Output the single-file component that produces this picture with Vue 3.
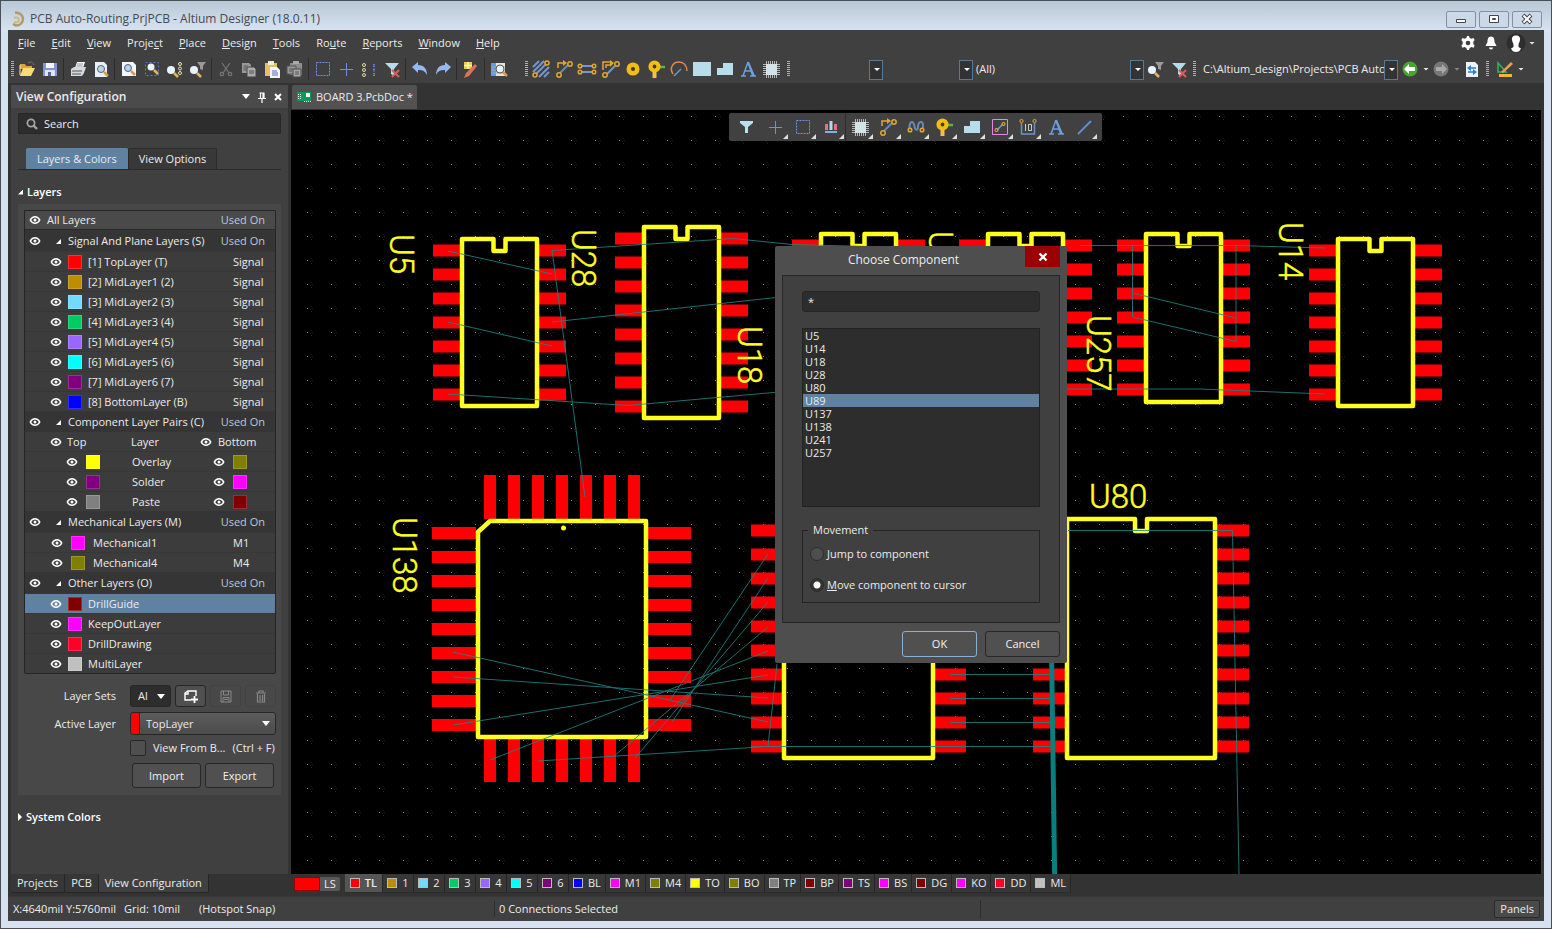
<script setup>
import { ref } from 'vue'

const menus = [
  ['', 'F', 'ile'], ['', 'E', 'dit'], ['', 'V', 'iew'], ['Proje', 'c', 't'], ['', 'P', 'lace'], ['', 'D', 'esign'],
  ['', 'T', 'ools'], ['Ro', 'u', 'te'], ['', 'R', 'eports'], ['', 'W', 'indow'], ['', 'H', 'elp']
]

const fileTools = [
  ['open', 'save'], ['print', 'preview'], ['zoom-page', 'zoom-area', 'zoom-objects', 'zoom-filter'],
  ['cut', 'copy', 'paste', 'paste-special'], ['select-area', 'move', 'deselect', 'clear-filter'],
  ['undo', 'redo'], ['wizard'], ['inspect']
]
const placeTools = ['multi-route', 'route', 'diff-pair', 'route-diff', 'pad', 'via', 'arc', 'fill', 'polygon', 'string', 'component']
const floatTools = [
  ['funnel', false], ['move', true], ['select-area', true], ['align', true], ['component', true], ['route', true],
  ['tune', true], ['via', true], ['polygon', true], ['room', true], ['dimension', true], ['string', false], ['line', true]
]

const signalLayers = [
  ['[1] TopLayer (T)', '#ff0000'], ['[2] MidLayer1 (2)', '#bc8e00'], ['[3] MidLayer2 (3)', '#70dbfa'],
  ['[4] MidLayer3 (4)', '#00cc66'], ['[5] MidLayer4 (5)', '#9966ff'], ['[6] MidLayer5 (6)', '#00ffff'],
  ['[7] MidLayer6 (7)', '#800080'], ['[8] BottomLayer (B)', '#0000ff']
]
const pairLayers = [
  ['Overlay', '#ffff00', '#808000'], ['Solder', '#800080', '#ff00ff'], ['Paste', '#808080', '#800000']
]
const mechLayers = [['Mechanical1', '#ff00ff', 'M1'], ['Mechanical4', '#808000', 'M4']]
const otherLayers = [
  ['DrillGuide', '#800000'], ['KeepOutLayer', '#ff00ff'], ['DrillDrawing', '#ff002a'], ['MultiLayer', '#c0c0c0']
]
const activeRow = ref('DrillGuide')

const layerTabs = [
  ['TL', '#ff0000'], ['1', '#bc8e00'], ['2', '#70dbfa'], ['3', '#00cc66'], ['4', '#9966ff'], ['5', '#00ffff'],
  ['6', '#800080'], ['BL', '#0000ff'], ['M1', '#ff00ff'], ['M4', '#808000'], ['TO', '#ffff00'], ['BO', '#808000'],
  ['TP', '#808080'], ['BP', '#800000'], ['TS', '#800080'], ['BS', '#ff00ff'], ['DG', '#800000'], ['KO', '#ff00ff'],
  ['DD', '#ff002a'], ['ML', '#c0c0c0']
]

const mask = ref('*')
const components = ['U5', 'U14', 'U18', 'U28', 'U80', 'U89', 'U137', 'U138', 'U241', 'U257']
const chosen = ref('U89')
const movement = ref('cursor')

// Board drawing: every dual-row package is an outline with a notch and two columns of pads.
const dip = (x, y, w, h, pads, padTop, padLen) => {
  const mid = x + w / 2
  const rects = []
  for (let i = 0; i < pads; i++) {
    const py = padTop + 24 * i
    rects.push({ x: x - padLen - 1, y: py, w: padLen, h: 12 }, { x: x + w + 1, y: py, w: padLen, h: 12 })
  }
  return {
    rects,
    outline: `M${x} ${y}H${mid - 6}V${y + 12}H${mid + 6}V${y}H${x + w}V${y + h}H${x}Z`
  }
}
const dips = [
  dip(462, 239, 75, 167, 7, 244.5, 28),
  dip(644, 227, 75, 191, 8, 232.5, 28),
  dip(821, 234, 75, 168, 7, 239.5, 28),
  dip(988, 234, 75, 168, 7, 239.5, 28),
  dip(1146, 234, 75, 168, 7, 239.5, 28),
  dip(1338, 239, 75, 167, 7, 244.5, 28),
  dip(784, 519, 149, 239, 10, 524.5, 32),
  dip(1067, 519, 148, 239, 10, 524.5, 33)
]
const quadPads = []
for (let i = 0; i < 9; i++) {
  quadPads.push({ x: 432, y: 527 + 24 * i, w: 44, h: 12 }, { x: 647, y: 527 + 24 * i, w: 44, h: 12 })
}
for (let i = 0; i < 7; i++) {
  quadPads.push({ x: 484 + 24 * i, y: 475, w: 12, h: 44 }, { x: 484 + 24 * i, y: 738, w: 12, h: 44 })
}
const nets = [
  'M448 251L552 274', 'M448 322L552 346', 'M448 394L628 405.5L790 391', 'M552 250.5L733 238.5L792 244.5L1000 250',
  'M552 322L790 296', 'M552 250L585 497', 'M1080 245.5H1236L1325 248', 'M1066 389H1200L1325 394',
  'M1132.5 245V317L1236 341.5V245', 'M1132.5 293L1236 318',
  'M453 652L768 722', 'M453 677L768 698', 'M453 725L768 675', 'M490 760L768 651', 'M538 761L768 746.5',
  'M635 758L768 602', 'M613 757L768 627', 'M670 700L768 554', 'M672 722L768 578', 'M777 664L768 746',
  'M751 746.5H1052', 'M950 674.5H1052', 'M950 698.5H1052', 'M950 722.5H1052', 'M1068 530.5H1232.5L1239.5 900'
]
const labels = [
  ['U5', 390, 234], ['U28', 572, 229], ['U18', 738, 326], ['U14', 1279, 222], ['U257', 1087, 315], ['U138', 393, 517], ['U89', 929, 231]
]
</script>

<template>
  <div class="window">
    <svg class="defs" aria-hidden="true">
      <symbol id="i-open" viewBox="0 0 20 20"><path d="M3 5h5l1 2h6v3H3z" fill="#d9a441"/><path d="M3 17L6 9h12l-4 8z" fill="#ffd978"/><path d="M3 16V6" stroke="#ffe9a8"/><path d="M11 4c3-2 5-1 6 2" fill="none" stroke="#777"/></symbol>
      <symbol id="i-save" viewBox="0 0 20 20"><path d="M3 4h14v13H3z" fill="#8295d2"/><path d="M6 4h8v5H6z" fill="#f4f6fd"/><path d="M5 11h10v6H5z" fill="#dfe5f5"/><path d="M8 13h3v4H8z" fill="#55649a"/></symbol>
      <symbol id="i-print" viewBox="0 0 20 20"><path d="M7 9l2-6h8l-2 6z" fill="#fff"/><path d="M9 5h6M8.500 7h6" stroke="#888"/><path d="M3 10l3-2h12l-2 6-2 3H3z" fill="#d5d8dc"/><path d="M4 12h10M4 15h9" stroke="#555"/></symbol>
      <symbol id="i-preview" viewBox="0 0 20 20"><path d="M4 3h9l3 3v12H4z" fill="#e6f0fb"/><circle cx="10" cy="10" r="3.500" fill="#b9d4ee" stroke="#566"/><path d="M13 13l4 4" stroke="#d89a52" stroke-width="2.500"/></symbol>
      <symbol id="i-zoom-page" viewBox="0 0 20 20"><path d="M3 3h11l3 3v11H3z" fill="#f2f8ff"/><circle cx="9" cy="9" r="3.500" fill="#b5d2f0" stroke="#4d5f7c"/><path d="M12 12l4 4" stroke="#d89a52" stroke-width="2.500"/></symbol>
      <symbol id="i-zoom-area" viewBox="0 0 20 20"><path d="M3.500 3.500h13v13h-13z" fill="none" stroke="#5f76d0" stroke-dasharray="2 2"/><circle cx="9" cy="8" r="3.500" fill="#e6f4ff"/><path d="M12 11l4 4" stroke="#e7b35d" stroke-width="2.500"/></symbol>
      <symbol id="i-zoom-objects" viewBox="0 0 20 20"><circle cx="6" cy="11" r="4" fill="#e6f4ff"/><path d="M9 14l4 4" stroke="#e7b35d" stroke-width="2.500"/><g fill="none" stroke="#eee6a0"><circle cx="15" cy="5" r="1.500"/><circle cx="15" cy="9.500" r="1.500"/><circle cx="15" cy="14" r="1.500"/></g></symbol>
      <symbol id="i-zoom-filter" viewBox="0 0 20 20"><circle cx="6" cy="11" r="4" fill="#e6f4ff"/><path d="M9 14l4 4" stroke="#e7b35d" stroke-width="2.500"/><path d="M9 3h9l-3 4v4l-3-1V7z" fill="#999"/></symbol>
      <symbol id="i-cut" viewBox="0 0 20 20"><g fill="none" stroke="#757575" stroke-width="1.300"><path d="M6 4l7 10M14 4L7 14"/><circle cx="6" cy="15" r="1.700"/><circle cx="14" cy="15" r="1.700"/></g></symbol>
      <symbol id="i-copy" viewBox="0 0 20 20"><path d="M3 4h7l2 2v8H3z" fill="#999"/><path d="M8 8h7l2 2v8H8z" fill="#aaa" stroke="#444"/><path d="M10 12h5M10 14h5M4.500 7h4M4.500 9h3M4.500 11h3" stroke="#555"/></symbol>
      <symbol id="i-paste" viewBox="0 0 20 20"><path d="M3 4h12v13H3z" fill="#e9bd67"/><path d="M6 2h6v4H6z" fill="#f5edcf"/><path d="M8 8h7l3 3v8H8z" fill="#f2f6ff"/><path d="M10 12h5M10 14h6M10 16h6" stroke="#5570a8"/></symbol>
      <symbol id="i-paste-special" viewBox="0 0 20 20"><path d="M5 4h12v12H5z" fill="#8d8d8d"/><path d="M8 2h6v3H8z" fill="#aaa"/><path d="M2 7h9v8H2z" fill="#999" stroke="#555"/><path d="M8 10h8v8H8z" fill="#a5a5a5" stroke="#4a4a4a"/><path d="M4 10h4M4 12h3M10 13h4M10 15h4" stroke="#555"/></symbol>
      <symbol id="i-select-area" viewBox="0 0 20 20"><path d="M3.500 3.500h13v13h-13z" fill="none" stroke="#7490e0" stroke-dasharray="2 1"/></symbol>
      <symbol id="i-move" viewBox="0 0 20 20"><path d="M10.500 4v13M4 10.500h13" stroke="#6c90dc"/></symbol>
      <symbol id="i-deselect" viewBox="0 0 20 20"><g fill="none" stroke="#e4dca0"><circle cx="5" cy="6" r="1.500"/><circle cx="5" cy="11" r="1.500"/><circle cx="5" cy="16" r="1.500"/></g><path d="M15 5v3M15 9.500v3M15 14v3" stroke="#6480cc" stroke-width="2" stroke-dasharray="1.500 .5"/></symbol>
      <symbol id="i-clear-filter" viewBox="0 0 20 20"><path d="M3 4h14l-5 6v7l-3-2v-5z" fill="#b4dce8"/><path d="M10 11l7 7M17 11l-7 7" stroke="#e05a5a" stroke-width="2"/></symbol>
      <symbol id="i-undo" viewBox="0 0 20 20"><path d="M2 8l6-5v3c6 0 9 4 9 10-2-4-4-5-9-5v3z" fill="#94b8f0"/></symbol>
      <symbol id="i-redo" viewBox="0 0 20 20"><path d="M18 8l-6-5v3C6 6 3 10 3 16c2-4 4-5 9-5v3z" fill="#94b8f0"/></symbol>
      <symbol id="i-wizard" viewBox="0 0 20 20"><path d="M3 3h8v7H3z" fill="#e8cd4c"/><path d="M7 3v7M3 6.500h8" stroke="#fff6b8" stroke-width="1.500"/><path d="M14 5l2 2-8 10-5 2 2-5z" fill="#dc7258"/></symbol>
      <symbol id="i-inspect" viewBox="0 0 20 20"><path d="M2 4h5v13H2z" fill="#5f9ede"/><path d="M7 4h9v13H7z" fill="#ece2d4"/><path d="M2 8h14M2 11h14M2 14h14" stroke="#9ab" /><circle cx="11" cy="10" r="4" fill="#e6f4ff" stroke="#555"/><path d="M14 13l4 4" stroke="#d89a52" stroke-width="2.500"/></symbol>
      <symbol id="i-multi-route" viewBox="0 0 20 20"><path d="M2 8l6-6M2 13L13 2M4 16L16 4M8 18L18 8M13 18l5-5" stroke="#7297d2" stroke-width="2"/><g fill="#404040" stroke="#e3a72f" stroke-width="1.500"><circle cx="4" cy="16" r="2"/><circle cx="16" cy="4" r="2"/></g></symbol>
      <symbol id="i-route" viewBox="0 0 20 20"><path d="M4 9V4h6" fill="none" stroke="#e3a72f" stroke-width="1.500"/><path d="M9 1l4 3-4 3z" fill="#e3a72f"/><path d="M6 14l8-8" stroke="#6589b8" stroke-width="2"/><g fill="none" stroke="#e3a72f" stroke-width="1.500"><circle cx="5" cy="16" r="2.200"/><circle cx="16" cy="5" r="2.200"/></g></symbol>
      <symbol id="i-diff-pair" viewBox="0 0 20 20"><path d="M5 7h10M5 13h10" stroke="#7297d2" stroke-width="2"/><g fill="none" stroke="#e3a72f" stroke-width="1.500"><circle cx="3" cy="7" r="1.800"/><circle cx="17" cy="7" r="1.800"/><circle cx="3" cy="13" r="1.800"/><circle cx="17" cy="13" r="1.800"/></g></symbol>
      <symbol id="i-route-diff" viewBox="0 0 20 20"><path d="M3 11V3h8M6 9V6h5" fill="none" stroke="#e3a72f" stroke-width="1.500"/><path d="M10 1l4 3-4 4z" fill="#e3a72f"/><path d="M7 15l8-8" stroke="#7297d2" stroke-width="2"/><g fill="none" stroke="#e3a72f" stroke-width="1.500"><circle cx="5" cy="16" r="2.200"/><circle cx="17" cy="5" r="2.200"/></g></symbol>
      <symbol id="i-pad" viewBox="0 0 20 20"><circle cx="10" cy="10" r="4.300" fill="#4a3a00" stroke="#f2bd17" stroke-width="4.500"/></symbol>
      <symbol id="i-via" viewBox="0 0 20 20"><path d="M10 8h9" stroke="#55b455" stroke-width="2.500"/><path d="M8.500 10v9" stroke="#f0c058" stroke-width="4"/><circle cx="8.500" cy="7.500" r="4" fill="#4a3a00" stroke="#f2bd17" stroke-width="4.200"/></symbol>
      <symbol id="i-arc" viewBox="0 0 20 20"><path d="M4 15C0 9 4 3 10 3c5 0 8 4 8 9" fill="none" stroke="#e08a4c" stroke-width="1.500"/><path d="M5 17l7-7" stroke="#7297d2" stroke-width="1.500"/></symbol>
      <symbol id="i-fill" viewBox="0 0 20 20"><path d="M1 3h18v14H1z" fill="#b7dcea"/></symbol>
      <symbol id="i-polygon" viewBox="0 0 20 20"><path d="M2 9h6V4h10v12H2z" fill="#b7dcea"/></symbol>
      <symbol id="i-string" viewBox="0 0 20 20"><path d="M10 3l6 14M10 3L5 17M7 12h6M3 17h5M12 17h6" stroke="#6c9fdc" stroke-width="1.500" fill="none"/><path d="M9 3h2l6 14h-3z" fill="#6c9fdc"/></symbol>
      <symbol id="i-component" viewBox="0 0 20 20"><path d="M5.500 2v17M7.500 2v17M9.500 2v17M11.500 2v17M13.500 2v17M15.500 2v17M2 5.500h17M2 7.500h17M2 9.500h17M2 11.500h17M2 13.500h17M2 15.500h17" stroke="#b5b5b5"/><path d="M5 5h11v11H5z" fill="#d2e4ea"/></symbol>
      <symbol id="i-funnel" viewBox="0 0 20 20"><path d="M3 4h13v2l-5 4v6H8v-6L3 6z" fill="#b9e0ee"/></symbol>
      <symbol id="i-align" viewBox="0 0 20 20"><path d="M4 7h3v6H4zM13 7h3v6h-3z" fill="#e07484"/><path d="M8.500 4h3v9h-3z" fill="#b9d4ee"/><path d="M4 15h12" stroke="#88aee6" stroke-width="2"/></symbol>
      <symbol id="i-tune" viewBox="0 0 20 20"><path d="M5 13C2 10 4 5 6 5s2 3 3 6 3 2 3-1 1-5 3-5 3 4 1 8" fill="none" stroke="#6589b8" stroke-width="2"/><g fill="#404040" stroke="#e3a72f" stroke-width="1.500"><circle cx="4" cy="13" r="1.800"/><circle cx="16" cy="13" r="1.800"/></g></symbol>
      <symbol id="i-room" viewBox="0 0 20 20"><path d="M2.500 2.500h15v15h-15z" fill="none" stroke="#e58ae0"/><path d="M7 13l6-6" stroke="#6c9fdc" stroke-width="1.500"/><g fill="none" stroke="#e3a72f" stroke-width="1.200"><circle cx="6.500" cy="13" r="1.500"/><circle cx="13.500" cy="7" r="1.500"/></g></symbol>
      <symbol id="i-dimension" viewBox="0 0 20 20"><path d="M3.500 6v11h13V6" fill="none" stroke="#6b93c8" stroke-width="1.500"/><path d="M7.500 7v7M10.500 7.500h3v6h-3z" fill="none" stroke="#ccc"/><circle cx="3.500" cy="4" r="1.600" fill="none" stroke="#e3a72f"/><circle cx="16.500" cy="4" r="1.600" fill="none" stroke="#e3a72f"/></symbol>
      <symbol id="i-line" viewBox="0 0 20 20"><path d="M4 17L17 4" stroke="#5c8fcd" stroke-width="2"/></symbol>
      <symbol id="i-back" viewBox="0 0 20 20"><circle cx="10" cy="10" r="7.500" fill="#44a62e"/><path d="M4 10l5-5v3h6v4H9v3z" fill="#fff"/></symbol>
      <symbol id="i-forward" viewBox="0 0 20 20"><circle cx="10" cy="10" r="7.500" fill="#777"/><path d="M16 10l-5-5v3H5v4h6v3z" fill="#aaa"/></symbol>
      <symbol id="i-refresh" viewBox="0 0 20 20"><path d="M4 3h9l3 3v12H4z" fill="#eaf3fd"/><path d="M8 9h6M6 13h6" stroke="#2d7fd2" stroke-width="1.500"/><path d="M9 6L5 9l4 3zM11 10l4 3-4 3z" fill="#2d7fd2"/></symbol>
      <symbol id="i-drafting" viewBox="0 0 20 20"><path d="M3 4v9h8z" fill="none" stroke="#35b26a" stroke-width="1.500"/><path d="M6 13L16 3l2 2L8 14z" fill="#ee9e52"/><path d="M4 15h13v3H4z" fill="#f0b442"/></symbol>
      <symbol id="i-eye" viewBox="0 0 12 12"><path d="M1.300 6c2.300-4.400 7.100-4.400 9.400 0-2.300 4.400-7.100 4.400-9.400 0z" fill="none" stroke="#fff" stroke-width="1.600"/><circle cx="6" cy="6" r="1.500" fill="#fff"/></symbol>
      <symbol id="i-gear" viewBox="0 0 16 16"><path d="M7 1h2l.6 2 1.800.8L13.500 3l1.200 2-1.400 1.700v2.200l1.400 1.800-1.200 2-2.100-.6-1.800.9L9 15H7l-.6-2-1.800-.9-2.100.6-1.200-2 1.400-1.800V6.700L1.300 5l1.200-2 2.100.8L6.400 3z" fill="#fff"/><circle cx="8" cy="8" r="2.300" fill="#404040"/></symbol>
      <symbol id="i-bell" viewBox="0 0 16 16"><path d="M8 1.500c3 0 3.500 3 3.500 5.500l2 4H2.500l2-4c0-2.500.5-5.500 3.500-5.500zM6 12.500h4c0 2.500-4 2.500-4 0z" fill="#fff"/></symbol>
      <symbol id="i-user" viewBox="0 0 20 20"><circle cx="10" cy="10" r="9.500" fill="#2e2e2e"/><path d="M10 2.500c3 0 4.500 2 4 4.500-.4 2.500-1.400 3-1.500 5v2l2.500 1.500C14 18 12.500 19 10 19s-4-1-5-3.500L7.500 14v-2C7.400 10 6.400 9.500 6 7c-.5-2.500 1-4.500 4-4.500z" fill="#fff"/></symbol>
      <symbol id="i-pin" viewBox="0 0 12 12"><path d="M3.500 2h5M4.500 2v5M7 2v5M8 2v5M2 7.500h8M6 8v4" stroke="#fff" stroke-width="1.200"/></symbol>
      <symbol id="i-close" viewBox="0 0 12 12"><path d="M3 3l6 6M9 3l-6 6" stroke="#fff" stroke-width="2"/></symbol>
      <symbol id="i-search" viewBox="0 0 14 14"><circle cx="6" cy="6" r="3.600" fill="none" stroke="#a4a4a4" stroke-width="1.800"/><path d="M8.500 8.500l3.500 3.500" stroke="#a4a4a4" stroke-width="2.400"/></symbol>
      <symbol id="i-addset" viewBox="0 0 16 16"><path d="M8 12H2V5l3-2h8v5M2 6h3V3" fill="none" stroke="#fff" stroke-width="1.400"/><path d="M11.500 8v7M8 11.500h7" stroke="#fff" stroke-width="1.800"/></symbol>
      <symbol id="i-disk" viewBox="0 0 14 14"><path d="M2 2h10v11H2zM4.500 2v4h5V2M4 13V8.500h6V13M5 10.500h4" fill="none" stroke="#888"/></symbol>
      <symbol id="i-trash" viewBox="0 0 14 14"><path d="M2 4h10M5 4V2h4v2M3.500 5v8h7V5M6 6v6M8.500 6v6" fill="none" stroke="#888" stroke-width="1.200"/></symbol>
      <symbol id="i-board" viewBox="0 0 16 14"><path d="M1 2h14v9H1z" fill="#0f9a5c"/><path d="M2 4.500h3M2 6.500h3M2 8.500h3M8 11.500h7" stroke="#eafff2" stroke-dasharray="1 1"/><path d="M10 3h4v4h-4z" fill="#eafff2"/></symbol>
      <symbol id="i-logo" viewBox="0 0 16 20"><path d="M5 3.500c5 0 8 3 8 6.500s-3 6.500-7 6.500L3 15" fill="none" stroke="#b39a66" stroke-width="2.500"/><path d="M4 9c3-1 5 0 5 2s-3 3-5 2" fill="none" stroke="#d0b67c" stroke-width="2"/></symbol>
    </svg>

    <header class="titlebar">
      <svg class="logo"><use href="#i-logo" /></svg>
      <h1>PCB Auto-Routing.PrjPCB - Altium Designer (18.0.11)</h1>
      <div class="wincontrols">
        <button aria-label="Minimize"><svg viewBox="0 0 14 12"><path d="M2.500 6.500h9v3h-9z" fill="#fff" stroke="#445" /></svg></button>
        <button aria-label="Restore"><svg viewBox="0 0 14 12"><path d="M2.500 2.500h9v7h-9z" fill="#fff" stroke="#445" /><path d="M5.500 5.500h3v1h-3z" fill="none" stroke="#445" /></svg></button>
        <button aria-label="Close window"><svg viewBox="0 0 14 12"><path d="M3 2l8 8M11 2l-8 8" stroke="#445" stroke-width="4" /><path d="M3.500 2.500l7 7M10.500 2.500l-7 7" stroke="#fff" stroke-width="2" /></svg></button>
      </div>
    </header>

    <div class="app">
      <div class="menubar">
        <nav>
          <button v-for="m in menus" :key="m.join('')">{{ m[0] }}<u>{{ m[1] }}</u>{{ m[2] }}</button>
        </nav>
        <div class="account">
          <button aria-label="Preferences"><svg class="s16"><use href="#i-gear" /></svg></button>
          <button aria-label="Notifications"><svg class="s16"><use href="#i-bell" /></svg></button>
          <button aria-label="Account"><svg class="s20"><use href="#i-user" /></svg><i class="caret"></i></button>
        </div>
      </div>

      <div class="toolbar">
        <i class="grip"></i>
        <div v-for="(group, g) in fileTools" :key="g" class="group">
          <button v-for="t in group" :key="t" :aria-label="t"><svg class="s20"><use :href="'#i-' + t" /></svg></button>
        </div>
        <i class="grip spaced"></i>
        <button v-for="t in placeTools" :key="t" :aria-label="t"><svg class="s20"><use :href="'#i-' + t" /></svg></button>
        <i class="grip after"></i>
        <label class="combo narrow"><select aria-label="Net filter"><option></option></select></label>
        <label class="combo narrow"><select aria-label="Component filter"><option></option></select></label>
        <label class="combo medium"><select aria-label="Mask filter"><option>(All)</option></select></label>
        <button aria-label="Zoom filtered"><svg class="s20"><use href="#i-zoom-filter" /></svg></button>
        <button aria-label="Clear filter"><svg class="s20"><use href="#i-clear-filter" /></svg></button>
        <i class="grip path"></i>
        <label class="combo wide"><select aria-label="Path"><option>C:\Altium_design\Projects\PCB Auto-Routing</option></select></label>
        <button aria-label="Back"><svg class="s20"><use href="#i-back" /></svg></button>
        <i class="caret"></i>
        <button aria-label="Forward"><svg class="s20"><use href="#i-forward" /></svg></button>
        <i class="caret dim"></i>
        <button aria-label="Refresh"><svg class="s20"><use href="#i-refresh" /></svg></button>
        <i class="grip path"></i>
        <button aria-label="Drafting"><svg class="s20"><use href="#i-drafting" /></svg></button>
        <i class="caret"></i>
      </div>

      <div class="main">
        <aside>
          <section class="panel">
            <div class="panelhead">
              <h2>View Configuration</h2>
              <button aria-label="Panel menu"><i class="caret big"></i></button>
              <button aria-label="Pin"><svg class="s12"><use href="#i-pin" /></svg></button>
              <button aria-label="Close panel"><svg class="s12"><use href="#i-close" /></svg></button>
            </div>
            <div class="panelbody">
              <label class="search"><svg class="s14"><use href="#i-search" /></svg><input type="text" placeholder="Search" aria-label="Search" /></label>
              <div class="viewtabs">
                <button class="on">Layers &amp; Colors</button><button>View Options</button>
              </div>
              <h3><i class="tri open"></i>Layers</h3>
              <div class="card">
                <div class="layers">
                  <div class="row all"><svg class="s12"><use href="#i-eye" /></svg><span>All Layers</span><a href="#">Used On</a></div>
                  <div class="row head"><svg class="s12"><use href="#i-eye" /></svg><i class="tri open"></i><span>Signal And Plane Layers (S)</span><a href="#">Used On</a></div>
                  <div v-for="l in signalLayers" :key="l[0]" class="row item">
                    <svg class="s12"><use href="#i-eye" /></svg><i class="swatch" :style="{ background: l[1] }"></i><span>{{ l[0] }}</span><em>Signal</em>
                  </div>
                  <div class="row head"><svg class="s12"><use href="#i-eye" /></svg><i class="tri open"></i><span>Component Layer Pairs (C)</span><a href="#">Used On</a></div>
                  <div class="row pairhead">
                    <svg class="s12"><use href="#i-eye" /></svg><span>Top</span><span>Layer</span><svg class="s12"><use href="#i-eye" /></svg><span>Bottom</span>
                  </div>
                  <div v-for="l in pairLayers" :key="l[0]" class="row pair">
                    <svg class="s12"><use href="#i-eye" /></svg><i class="swatch" :style="{ background: l[1] }"></i><span>{{ l[0] }}</span>
                    <svg class="s12"><use href="#i-eye" /></svg><i class="swatch" :style="{ background: l[2] }"></i>
                  </div>
                  <div class="row head"><svg class="s12"><use href="#i-eye" /></svg><i class="tri open"></i><span>Mechanical Layers (M)</span><a href="#">Used On</a></div>
                  <div v-for="l in mechLayers" :key="l[0]" class="row item mech">
                    <svg class="s12"><use href="#i-eye" /></svg><i class="swatch" :style="{ background: l[1] }"></i><span>{{ l[0] }}</span><em>{{ l[2] }}</em>
                  </div>
                  <div class="row head"><svg class="s12"><use href="#i-eye" /></svg><i class="tri open"></i><span>Other Layers (O)</span><a href="#">Used On</a></div>
                  <div v-for="l in otherLayers" :key="l[0]" class="row item" :class="{ active: activeRow === l[0] }" @click="activeRow = l[0]">
                    <svg class="s12"><use href="#i-eye" /></svg><i class="swatch" :style="{ background: l[1] }"></i><span>{{ l[0] }}</span>
                  </div>
                </div>
                <div class="form">
                  <label for="sets">Layer Sets</label>
                  <div class="setrow">
                    <div class="drop dark"><select id="sets"><option>All Layers</option></select><i class="caret big"></i></div>
                    <button class="raised" aria-label="Add set"><svg class="s16"><use href="#i-addset" /></svg></button>
                    <button disabled aria-label="Save set"><svg class="s14"><use href="#i-disk" /></svg></button>
                    <button disabled aria-label="Delete set"><svg class="s14"><use href="#i-trash" /></svg></button>
                  </div>
                  <label for="active">Active Layer</label>
                  <div class="drop layer"><select id="active"><option>TopLayer</option></select><i class="caret big"></i></div>
                  <label class="check"><input type="checkbox" /><span>View From B...</span><span>(Ctrl + F)</span></label>
                  <div class="ioRow"><button class="btn">Import</button><button class="btn">Export</button></div>
                </div>
              </div>
              <h3><i class="tri shut"></i>System Colors</h3>
            </div>
          </section>
          <div class="paneltabs"><button>Projects</button><button>PCB</button><button class="on">View Configuration</button></div>
        </aside>

        <section class="doc">
          <div class="doctabs"><button><svg class="boardicon"><use href="#i-board" /></svg>BOARD 3.PcbDoc *</button></div>
          <div class="canvas">
            <svg class="board">
              <defs>
                <pattern id="grid" x="307" y="116" width="24" height="24" patternUnits="userSpaceOnUse">
                  <path d="M0 0h1v1H0z" fill="#8c8c8c" /><path d="M3 1h1v1H3zM5 0h1v1H5zM4 3h1v1H4z" fill="#222" />
                </pattern>
              </defs>
              <g transform="translate(-291 -110)">
                <rect x="291" y="110" width="4000" height="3000" fill="url(#grid)" />
                <g class="pads">
                  <template v-for="(d, k) in dips" :key="k">
                    <rect v-for="(r, i) in d.rects" :key="i" :x="r.x" :y="r.y" :width="r.w" :height="r.h" />
                  </template>
                  <rect v-for="(r, i) in quadPads" :key="'q' + i" :x="r.x" :y="r.y" :width="r.w" :height="r.h" />
                </g>
                <g class="outlines">
                  <path v-for="(d, k) in dips" :key="k" :d="d.outline" />
                  <path d="M490 521H646V737H478V532Z" />
                </g>
                <circle cx="563.500" cy="528" r="2.500" fill="#ffff20" />
                <g class="nets"><path v-for="n in nets" :key="n" :d="n" /></g>
                <path d="M1051.500 650L1055 900" stroke="#0a7f80" stroke-width="5" />
                <g class="designators">
                  <text v-for="l in labels" :key="l[0]" :transform="`translate(${l[1]} ${l[2]}) rotate(90)`">{{ l[0] }}</text>
                  <text x="1089" y="508">U80</text>
                </g>
              </g>
            </svg>

            <div class="floatbar">
              <button v-for="t in floatTools" :key="t[0]" :class="{ more: t[1], ends: t[0] === 'align' }" :aria-label="t[0]"><svg class="s20"><use :href="'#i-' + t[0]" /></svg></button>
            </div>

            <form class="dialog" role="dialog" aria-labelledby="dlgtitle" @submit.prevent>
              <div class="dlghead"><h2 id="dlgtitle">Choose Component</h2><button type="button" aria-label="Close"><svg class="s14"><use href="#i-close" /></svg></button></div>
              <div class="dlgbody">
                <input v-model="mask" type="text" aria-label="Component mask" />
                <ul role="listbox" aria-label="Components">
                  <li v-for="c in components" :key="c" role="option" :aria-selected="c === chosen" :class="{ on: c === chosen }" @click="chosen = c">{{ c }}</li>
                </ul>
                <fieldset>
                  <legend>Movement</legend>
                  <label><input v-model="movement" type="radio" name="movement" value="jump" /><span><u>J</u>ump to component</span></label>
                  <label><input v-model="movement" type="radio" name="movement" value="cursor" /><span><u>M</u>ove component to cursor</span></label>
                </fieldset>
              </div>
              <div class="dlgfoot"><button class="btn default">OK</button><button type="button" class="btn">Cancel</button></div>
            </form>
          </div>
          <div class="layertabs">
            <button class="ls"><i></i><span>LS</span></button>
            <button v-for="(t, i) in layerTabs" :key="t[0]" :class="{ on: i === 0 }"><i :style="{ background: t[1] }"></i>{{ t[0] }}</button>
          </div>
        </section>
      </div>

      <footer class="status">
        <div class="coords"><span>X:4640mil Y:5760mil</span><span>Grid: 10mil</span><span>(Hotspot Snap)</span></div>
        <div class="conn">0 Connections Selected</div>
        <div class="rest"><button>Panels</button></div>
      </footer>
    </div>
  </div>
</template>

<style>
body { background: #d6e2ef; }
</style>

<style scoped>
* { box-sizing: border-box; }
.window {
  min-height: 100vh; display: flex; flex-direction: column; padding: 0 7px 7px;
  border: 1px solid #4a4f57; background: #d6e2f0; color: #ececec;
  font: 11px/16px "Open Sans", "Noto Sans", sans-serif;
}
.defs { position: absolute; width: 0; height: 0; }
button { font: inherit; color: inherit; background: none; border: 0; padding: 0; margin: 0; display: flex; align-items: center; justify-content: center; white-space: nowrap; }
select, input { font: inherit; color: inherit; }
select { appearance: none; }
h1, h2, h3 { font: inherit; margin: 0; }
svg { display: block; flex: none; }
.s12 { width: 12px; height: 12px; }
.s14 { width: 14px; height: 14px; }
.s16 { width: 16px; height: 16px; }
.s20 { width: 20px; height: 20px; }
.caret { width: 6px; height: 3px; background: #e8e8e8; clip-path: polygon(0 0, 100% 0, 50% 100%); flex: none; }
.caret.big { width: 8px; height: 5px; background: #fff; }
.caret.dim { background: #888; }

.titlebar { height: 29px; display: flex; align-items: center; gap: 4px; padding: 7px 2px 0 9px; margin: 0 -7px; background: linear-gradient(#b9c8d6, #d6e2ef); color: #454a52; }
.titlebar h1 { flex: 1; font-size: 12px; }
.logo { width: 16px; height: 20px; }
.wincontrols { display: flex; gap: 3px; padding-right: 7px; }
.wincontrols button { width: 30px; height: 17px; border: 1px solid #8190a8; border-radius: 2px; background: #cbd8e6; }
.wincontrols svg { width: 14px; height: 12px; }

.app { flex: 1; display: flex; flex-direction: column; background: #404040; }
.menubar { height: 26px; display: flex; justify-content: space-between; align-items: center; padding: 0 9px 0 2px; }
.menubar nav { display: flex; }
.menubar nav button { padding: 0 8px; }
.account { display: flex; gap: 7px; }
.account button { gap: 3px; }

.toolbar { height: 26px; display: flex; align-items: center; padding-left: 3px; margin-bottom: 1px; }
.toolbar button { width: 23px; height: 24px; flex: none; }
.group { display: flex; padding-right: 5px; background: linear-gradient(#2b2b2b, #2b2b2b) right 2px center / 1px 22px no-repeat; }
.group:nth-of-type(8) { background: none; }
.grip { width: 4px; height: 16px; flex: none; background: repeating-linear-gradient(#b0b0b0 0 1px, transparent 1px 2px); background-size: 3px 100%; background-repeat: no-repeat; }
.grip.spaced { margin: 0 0 0 10px; }
.grip.after { margin: 0 4px 0 5px; }
.grip.path { margin: 0 3px; }
.combo { position: relative; height: 20px; margin-right: 2px; flex: none; }
.combo select { width: 100%; height: 20px; border: 0; padding: 0 12px 0 3px; background: transparent; }
.combo::before { content: ""; position: absolute; right: 0; top: 1px; width: 12px; height: 18px; border: 1px solid #5a7793; background: #333; pointer-events: none; }
.combo::after { content: ""; position: absolute; right: 3px; top: 9px; width: 6px; height: 3px; background: #fff; clip-path: polygon(0 0, 100% 0, 50% 100%); pointer-events: none; }
.combo.narrow { width: 88px; }
.combo.medium { width: 169px; margin-right: 0; }
.combo.medium select { padding-left: 1px; }
.combo.wide { width: 198px; margin-right: 0; }
.toolbar > .caret { margin-left: 2px; }

.main { flex: 1; display: flex; background: #333; }
aside { width: 283px; flex: none; display: flex; flex-direction: column; padding: 2px 3px 0; }
.panel { flex: 1; display: flex; flex-direction: column; background: #404040; }
.panelhead { height: 23px; display: flex; align-items: center; gap: 6px; padding: 0 5px; background: #4b4b4b; }
.panelhead h2 { flex: 1; font-weight: 600; font-size: 12px; }
.panelhead button { width: 10px; height: 14px; }
.panelbody { padding: 5px 7px; }
.search { height: 21px; display: flex; align-items: center; gap: 5px; padding: 0 6px; border: 1px solid #272727; border-radius: 2px; background: #2d2d2d; }
.search input { flex: 1; min-width: 0; border: 0; outline: 0; background: none; padding: 0; }
.search input::placeholder { color: #ececec; opacity: 1; }
.viewtabs { display: flex; margin-top: 14px; padding-left: 8px; border-bottom: 1px solid #2a2a2a; }
.viewtabs button { height: 21px; padding: 0 10px; border: 1px solid #2b2b2b; border-bottom: 0; border-radius: 2px 2px 0 0; background: #383838; }
.viewtabs .on { background: #5f82a3; border-color: #5f82a3; }
h3 { display: flex; align-items: center; gap: 4px; font-weight: 600; height: 16px; margin-top: 14px; color: #fff; }
.tri { flex: none; background: #fff; width: 5px; height: 5px; }
.tri.open { clip-path: polygon(100% 0, 100% 100%, 0 100%); }
.tri.shut { width: 4px; height: 8px; clip-path: polygon(0 0, 100% 50%, 0 100%); }
.card { background: #484848; margin-top: 4px; padding: 6px 5px 7px 6px; }
.layers { border: 1px solid #252525; border-radius: 0 0 2px 2px; background: #3c3c3c; }
.row { height: 20px; display: flex; align-items: center; padding: 0 10px 0 4px; }
.row span { flex: 1; white-space: nowrap; }
.row em { width: 32px; font-style: normal; }
.row a { color: #b8c9da; text-decoration: none; }
.row.all { height: 19px; background: #4a4a4a; border-bottom: 1px solid #2a2a2a; gap: 6px; }
.row.head { height: 21px; background: #353535; }
.row.head .tri { margin: 2px 7px 0 15px; }
.row.item { padding-left: 25px; gap: 6px; border-top: 1px solid #373737; }
.row.mech { padding-left: 26px; gap: 8px; }
.swatch { width: 14px; height: 14px; flex: none; border: 1px solid #ffffff30; }
.row.active { background: #5f82a3; }
.row.pairhead { height: 19px; display: grid; grid-template-columns: 17px 64px 69px 18px 1fr; padding-left: 25px; }
.row.pair { display: grid; grid-template-columns: 20px 46px 81px 20px 1fr; padding-left: 41px; border-top: 1px solid #373737; }
.form { display: grid; grid-template-columns: 92px 146px; column-gap: 14px; row-gap: 5px; padding-top: 11px; align-items: center; }
.form > label { text-align: right; }
.setrow { display: flex; gap: 4px; }
.setrow button { flex: 1; height: 22px; border: 1px solid #424242; border-radius: 3px; }
.setrow .raised, .btn { background: #505050; border: 1px solid #272727; border-radius: 3px; color: #f0f0f0; }
.drop { position: relative; display: flex; }
.drop select { width: 100%; height: 22px; border: 1px solid #272727; border-radius: 3px; padding: 0 22px 0 7px; }
.drop .caret { position: absolute; right: 6px; top: 9px; pointer-events: none; }
.drop.dark { width: 41px; }
.drop.dark select { background: #2d2d2d; }
.drop.layer select { height: 23px; padding-left: 15px; background: linear-gradient(90deg, #f00 0 8px, #272727 8px 9px, transparent 9px), linear-gradient(#5c5c5c, #4c4c4c); }
.form .check { grid-column: 2; display: flex; align-items: center; gap: 7px; text-align: left; white-space: nowrap; }
.check input { appearance: none; width: 16px; height: 16px; margin: 0; border: 1px solid #272727; border-radius: 2px; background: #4f4f4f; }
.ioRow { grid-column: 2; display: flex; gap: 4px; padding: 2px 2px 0; }
.ioRow .btn { flex: 1; height: 25px; }
.paneltabs { display: flex; height: 19px; margin-bottom: 3px; }
.paneltabs button { padding: 0 6px; background: #373737; border: 1px solid #262626; border-top: 0; border-left: 0; border-radius: 0 0 2px 2px; }
.paneltabs .on { background: #404040; }

.doc { flex: 1; min-width: 0; display: flex; flex-direction: column; }
.doctabs { height: 27px; padding: 2px 0 0 1px; }
.doctabs button { height: 24px; padding: 0 4px; gap: 4px; background: #525252; border-radius: 2px 2px 0 0; }
.boardicon { width: 16px; height: 14px; }
.canvas { flex: 1; position: relative; overflow: hidden; background: #000; margin-right: 3px; }
.board { position: absolute; inset: 0; width: 100%; height: 100%; }
.pads { fill: #fc0006; }
.outlines { fill: none; stroke: #ffff20; stroke-width: 4.500; stroke-linejoin: round; }
.nets { fill: none; stroke: #1f8580; stroke-width: 1; opacity: .85; }
.designators { fill: #ffff20; stroke: #ffff20; stroke-width: .5; font: 300 33px Roboto, sans-serif; }

.floatbar { position: absolute; left: 438px; top: 3px; display: flex; padding: 0 4px; border-radius: 2px; background: #414141; }
.floatbar button { position: relative; width: 28px; height: 28px; }
.floatbar .more::after { content: ""; position: absolute; right: 1px; bottom: 2px; width: 5px; height: 5px; background: #e0e0e0; clip-path: polygon(100% 0, 100% 100%, 0 100%); }
.floatbar .ends { margin-right: 1px; box-shadow: 1px 0 #2c2c2c; }

.dialog { position: absolute; left: 484px; top: 136px; width: 292px; padding: 0 7px 6px; background: #4e4e4e; border-radius: 2px; }
.dlghead { display: flex; height: 29px; }
.dlghead h2 { flex: 1; text-align: center; padding: 6px 0 0; font-size: 12px; }
.dlghead button { width: 35px; height: 21px; background: #9c0003; }
.dlgbody { padding: 15px 19px 19px; background: #404040; border: 1px solid #272727; }
.dlgbody > input { display: block; width: 100%; height: 21px; padding: 0 5px; border: 1px solid #262626; border-radius: 3px; background: #2d2d2d; outline: 0; }
.dlgbody ul { list-style: none; margin: 16px 0 0; padding: 0; height: 179px; background: #2d2d2d; border: 1px solid #222; }
.dlgbody li { height: 13px; line-height: 13px; padding: 0 2px; }
.dlgbody li.on { background: #5f82a3; }
fieldset { margin: 15px 0 0; padding: 8px 7px 9px; border: 1px solid #242424; min-width: 0; }
legend { padding: 0 5px; margin-left: -2px; }
fieldset label { display: flex; align-items: center; gap: 3px; height: 16px; }
fieldset label + label { margin-top: 15px; }
fieldset input { appearance: none; width: 14px; height: 14px; margin: 0; border: 1px solid #2c2c2c; border-radius: 50%; background: #4e4e4e; }
fieldset input:checked { background: radial-gradient(circle, #fff 0 3px, #333 4px); }
.dlgfoot { display: flex; justify-content: flex-end; gap: 8px; padding-top: 8px; }
.dlgfoot .btn { width: 75px; height: 26px; }
.dlgfoot .default { border-color: #8ab0d2; }

.layertabs { display: flex; height: 19px; margin-bottom: 3px; padding-left: 3px; }
.layertabs button { min-width: 31px; padding: 0 4px; gap: 5px; background: #373737; border-right: 1px solid #262626; border-bottom: 1px solid #2b2b2b; }
.layertabs i { width: 10px; height: 10px; border: 1px solid #bbb; }
.layertabs .on { background: #555; font-weight: 600; padding: 0 5px; }
.layertabs .ls { padding: 0; gap: 0; border: 0; background: none; margin-right: 5px; }
.layertabs .ls i { width: 26px; height: 14px; background: #f00; border: 1px solid #900; }
.layertabs .ls span { background: #585858; line-height: 14px; padding: 0 4px; border-radius: 0 2px 2px 0; }

.status { height: 25px; display: flex; align-items: center; border-top: 1px solid #383838; }
.coords { width: 486px; display: flex; gap: 8px; padding-left: 5px; }
.coords span:last-child { margin-left: 11px; }
.conn { width: 486px; border-left: 1px solid #2e2e2e; padding-left: 4px; }
.rest { flex: 1; display: flex; justify-content: flex-end; border-left: 1px solid #2e2e2e; padding-right: 4px; }
.rest button { height: 18px; padding: 0 5px; background: #4a4a4a; border: 1px solid #2b2b2b; border-radius: 2px; }
</style>
